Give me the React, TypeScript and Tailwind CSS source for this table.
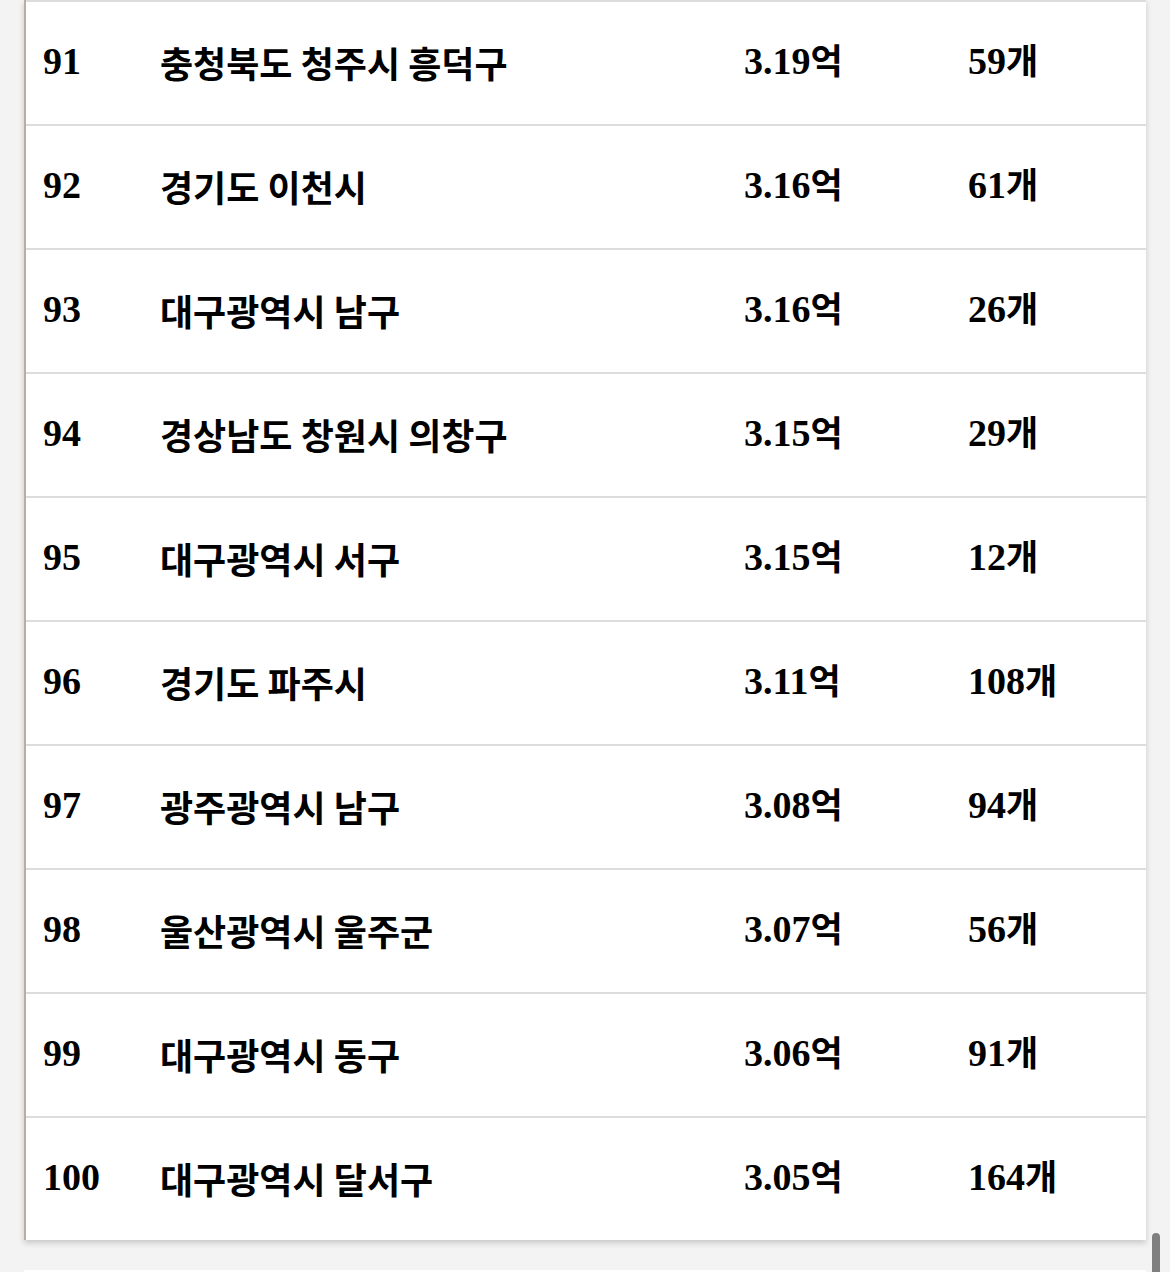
const rows = [
  { rank: 91, name: '충청북도 청주시 흥덕구', price: '3.19', count: '59' },
  { rank: 92, name: '경기도 이천시', price: '3.16', count: '61' },
  { rank: 93, name: '대구광역시 남구', price: '3.16', count: '26' },
  { rank: 94, name: '경상남도 창원시 의창구', price: '3.15', count: '29' },
  { rank: 95, name: '대구광역시 서구', price: '3.15', count: '12' },
  { rank: 96, name: '경기도 파주시', price: '3.11', count: '108' },
  { rank: 97, name: '광주광역시 남구', price: '3.08', count: '94' },
  { rank: 98, name: '울산광역시 울주군', price: '3.07', count: '56' },
  { rank: 99, name: '대구광역시 동구', price: '3.06', count: '91' },
  { rank: 100, name: '대구광역시 달서구', price: '3.05', count: '164' },
];

const serif = "font-['Liberation_Serif','Noto_Sans_CJK_KR',serif] text-[38px] font-bold";
const kor = "font-['Noto_Sans_CJK_KR',sans-serif] font-bold";

export default function App() {
  return (
    <div className="relative h-[1272px] overflow-hidden bg-[#f3f3f3] text-black">
      <div className="ml-[24px] w-[1122px] border-l-2 border-[#bcad9f] bg-white shadow-[0_3px_6px_rgba(0,0,0,0.18)]">
        {rows.map((r) => (
          <div
            key={r.rank}
            className="grid h-[124px] grid-cols-[117px_584px_224px_1fr] items-center border-t-2 border-[#dcdcdc] pb-[3px] pl-[17px]"
          >
            <span className={serif}>{r.rank}</span>
            <span className={`${kor} text-[36px]`}>{r.name}</span>
            <span className={serif}>
              {r.price}
              <span className={`${kor} text-[35px]`}>억</span>
            </span>
            <span className={serif}>
              {r.count}
              <span className={`${kor} text-[35px]`}>개</span>
            </span>
          </div>
        ))}
      </div>
      <div className="ml-[24px] mt-[30px] h-[40px] w-[1122px] bg-white" />
      <div className="absolute left-[1152px] top-[1233px] h-[60px] w-[8px] rounded-full bg-[#7f7f7f]" />
    </div>
  );
}
